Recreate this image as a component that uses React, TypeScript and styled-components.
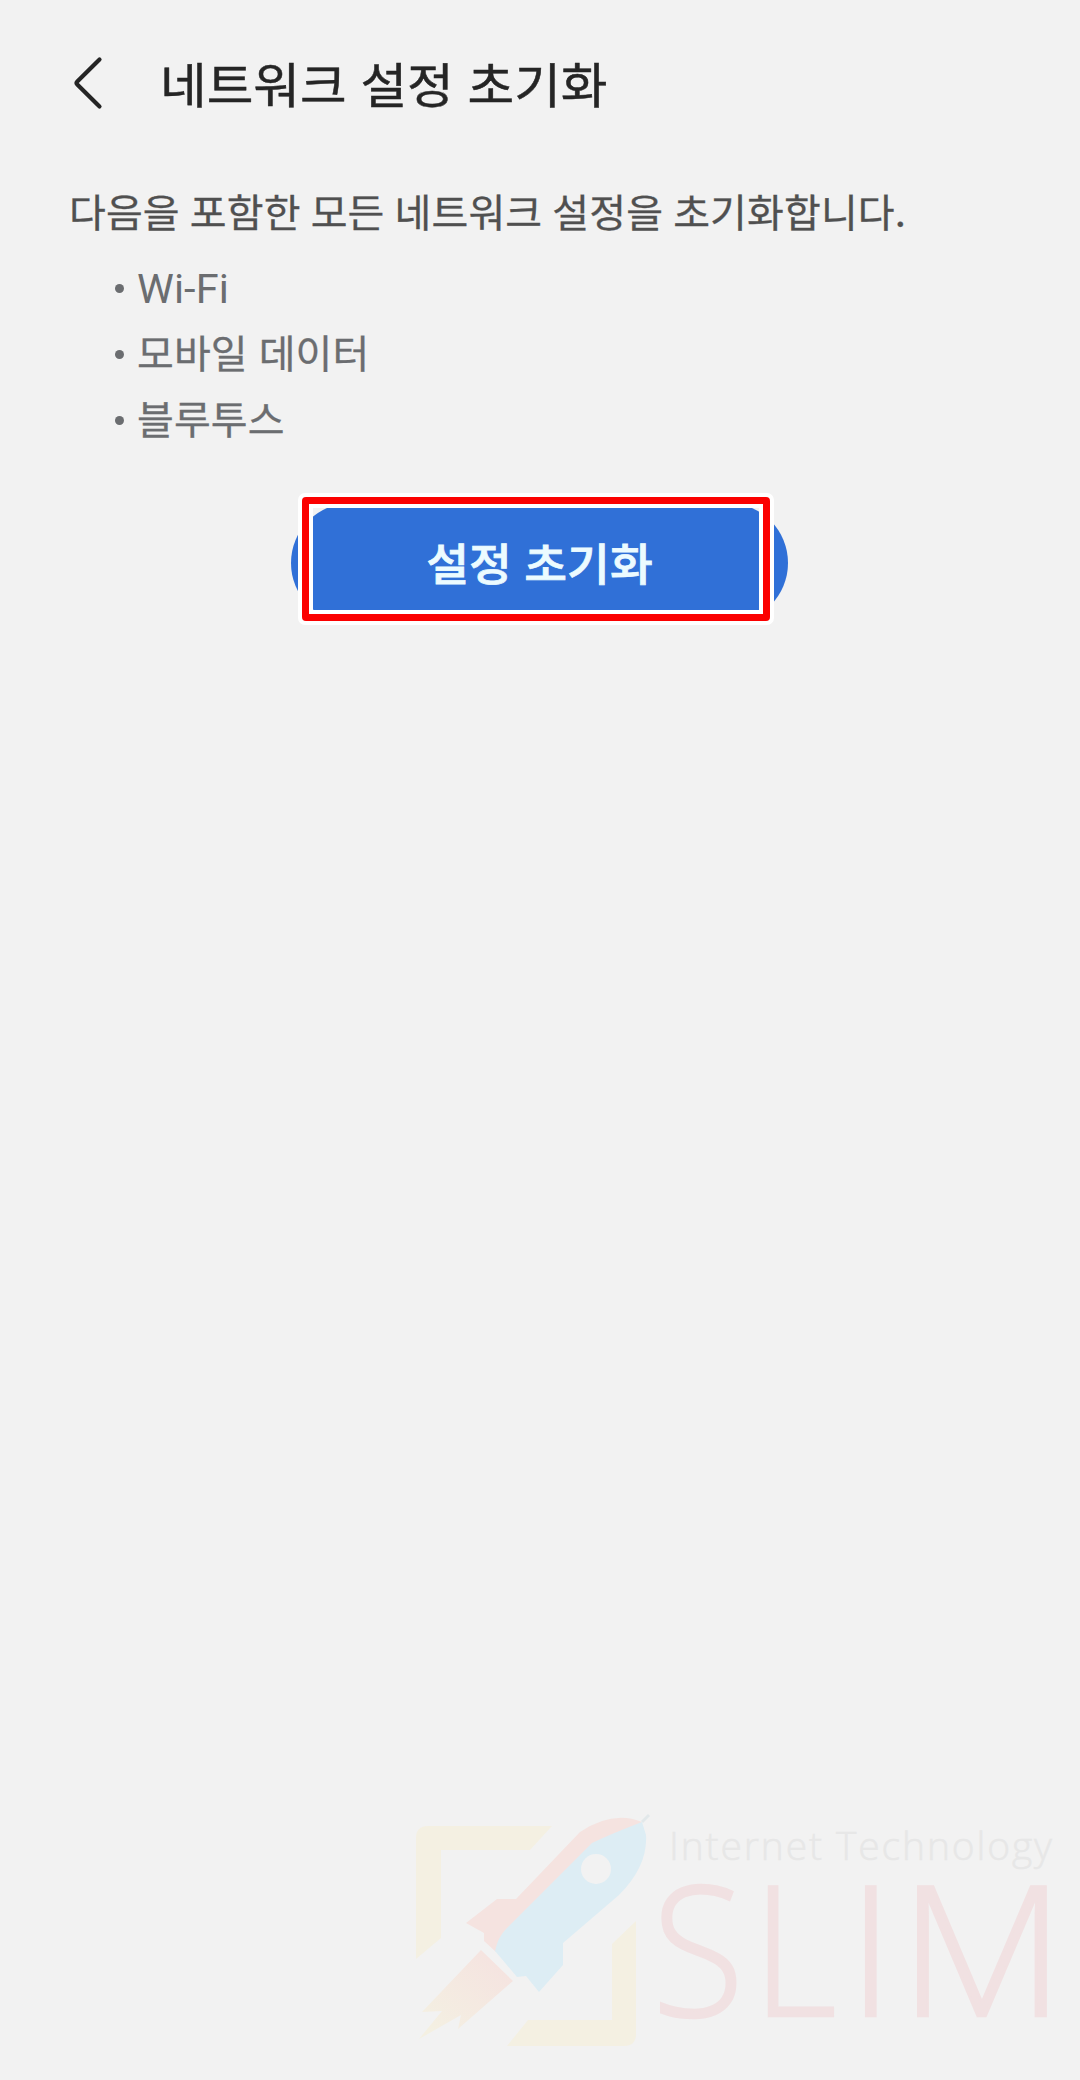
import React from "react";
import styled, { createGlobalStyle } from "styled-components";

const GlobalStyle = createGlobalStyle`
  *, *::before, *::after { box-sizing: border-box; }
  body {
    margin: 0;
    background: #f2f2f2;
    font-family: Roboto, "Noto Sans CJK KR", sans-serif;
  }
`;

const Screen = styled.div`
  display: flex;
  flex-direction: column;
  width: 1080px;
  height: 2080px;
  overflow: hidden;
  background: #f2f2f2;
`;

const Header = styled.header`
  display: flex;
  align-items: center;
  height: 168px;
  padding: 0 0 0 70px;
  gap: 55px;
`;

const BackButton = styled.button`
  display: flex;
  width: 35px;
  height: 64px;
  padding: 0;
  border: 0;
  background: none;
`;

const Title = styled.h1`
  margin: 0 0 4px;
  font: 400 50.7px/76px "Noto Sans CJK KR", sans-serif;
  word-spacing: 2.5px;
  -webkit-text-stroke: 0.5px currentColor;
  color: #252525;
  white-space: nowrap;
  transform: scaleY(0.95);
`;

const Content = styled.main`
  display: flex;
  flex-direction: column;
  padding: 11px 69px 0;
`;

const Description = styled.p`
  margin: 0;
  font: 400 40px/64px "Noto Sans CJK KR", sans-serif;
  letter-spacing: 0.12px;
  word-spacing: 1px;
  -webkit-text-stroke: 0.3px currentColor;
  color: #505050;
  white-space: nowrap;
  transform: scaleY(0.96);
`;

const List = styled.ul`
  display: flex;
  flex-direction: column;
  margin: 12px 0 0;
  padding: 0 0 0 46px;
  list-style: none;
`;

const Item = styled.li<{ $latin: boolean }>`
  display: flex;
  align-items: center;
  gap: 13px;
  height: 66px;
  font-size: ${({ $latin }) => ($latin ? "41.5px" : "40px")};
  line-height: 66px;
  word-spacing: 1px;
  letter-spacing: 0.1px;
  -webkit-text-stroke: ${({ $latin }) => ($latin ? "0" : "0.3px currentColor")};
  color: #6b6d70;

  &::before {
    content: "";
    width: 9px;
    height: 9px;
    border-radius: 50%;
    background: currentColor;
  }
`;

const ItemLabel = styled.span<{ $latin: boolean }>`
  padding-top: ${({ $latin }) => ($latin ? "1px" : "3px")};
  transform: ${({ $latin }) => ($latin ? "none" : "scaleY(0.96)")};
`;

const ButtonArea = styled.div`
  position: relative;
  display: flex;
  width: 497px;
  height: 120px;
  margin: 50px 0 0 222px;
`;

const ResetButton = styled.button`
  flex: 1;
  padding: 0 0 3px;
  border: 0;
  border-radius: 60px;
  background: #3070d7;
  color: #ecfbff;
  font: 500 46.5px/117px "Noto Sans CJK KR", sans-serif;
  word-spacing: 2px;
  -webkit-text-stroke: 0.8px currentColor;
  white-space: nowrap;
`;

const ButtonLabel = styled.span`
  display: block;
  transform: scaleY(0.95);
`;

const Highlight = styled.div`
  position: absolute;
  left: 7px;
  top: -10px;
  width: 476px;
  height: 132px;
  border: 4px solid #fff;
  border-radius: 7px;
  pointer-events: none;

  &::before {
    content: "";
    position: absolute;
    inset: 0;
    border: 7px solid #fb0000;
    border-radius: 4px;
  }

  &::after {
    content: "";
    position: absolute;
    inset: 7px;
    border: 4px solid #fff;
  }
`;

const Watermark = styled.footer`
  display: flex;
  justify-content: flex-end;
  margin-top: auto;
`;

const BackIcon = () => (
  <svg width="35" height="64" viewBox="0 0 35 64" fill="none" stroke="#252525" strokeWidth="4.2" strokeLinecap="round" strokeLinejoin="round">
    <path d="M29.5 7.500 7.300 29.500Q5.800 31 7.300 32.500L29.500 54.500" />
  </svg>
);

const SlimLogo = () => (
  <svg width="690" height="290" viewBox="0 0 690 290">
    <defs>
      <linearGradient id="flame" x1="112" y1="170" x2="45" y2="245" gradientUnits="userSpaceOnUse">
        <stop offset="0" stopColor="#f5e3e0" />
        <stop offset="1" stopColor="#f4f0e2" />
      </linearGradient>
    </defs>
    <g fill="#f4f0e2">
      <path d="M26 169V48Q26 36 38 36H162L140 60H51V148Z" />
      <path d="M246 131V244Q246 256 234 256H117L138 230H222V154Z" />
    </g>
    <path d="M91 160 123 191 68 239 71 225 29 249 52 221 32 222Z" fill="url(#flame)" />
    <path d="M252 32Q223 20 190 42L126 109H107L76 133 94 143V151L106 162 132 136 225 50Z" fill="#f5e3e0" />
    <path d="M252 32Q223 43 202 53L116 139Q108 147 105 161L127 187 136 186 149 202 173 175V153L229 105Q258 76 256 45Z" fill="#ddedf4" />
    <circle cx="206" cy="79" r="15" fill="#f2f2f2" />
    <path d="m252 32 7-7" stroke="#e2e8ea" strokeWidth="3" />
    <text x="279" y="70" fontFamily="'Open Sans', sans-serif" fontWeight="300" fontSize="39" textLength="383" fill="#e7e7e7" stroke="#e7e7e7" strokeWidth="0.500">Internet Technology</text>
    <g fontFamily="'Open Sans', sans-serif" fontWeight="300" fontSize="181" fill="#f1e1e2" stroke="#f1e1e2" strokeWidth="2.500">
      <text x="262" y="225.500" textLength="92" lengthAdjust="spacingAndGlyphs">S</text>
      <text x="362.500" y="225.500" textLength="84" lengthAdjust="spacingAndGlyphs">L</text>
      <text x="458" y="225.500">I</text>
      <text x="509" y="225.500" textLength="166" lengthAdjust="spacingAndGlyphs">M</text>
    </g>
  </svg>
);

const networkItems = [
  { label: "Wi-Fi", latin: true },
  { label: "모바일 데이터", latin: false },
  { label: "블루투스", latin: false },
];

export default function App() {
  return (
    <>
      <GlobalStyle />
      <Screen>
        <Header>
          <BackButton aria-label="뒤로">
            <BackIcon />
          </BackButton>
          <Title>네트워크 설정 초기화</Title>
        </Header>
        <Content>
          <Description>다음을 포함한 모든 네트워크 설정을 초기화합니다.</Description>
          <List>
            {networkItems.map(({ label, latin }) => (
              <Item key={label} $latin={latin}>
                <ItemLabel $latin={latin}>{label}</ItemLabel>
              </Item>
            ))}
          </List>
          <ButtonArea>
            <ResetButton>
              <ButtonLabel>설정 초기화</ButtonLabel>
            </ResetButton>
            <Highlight />
          </ButtonArea>
        </Content>
        <Watermark>
          <SlimLogo />
        </Watermark>
      </Screen>
    </>
  );
}
